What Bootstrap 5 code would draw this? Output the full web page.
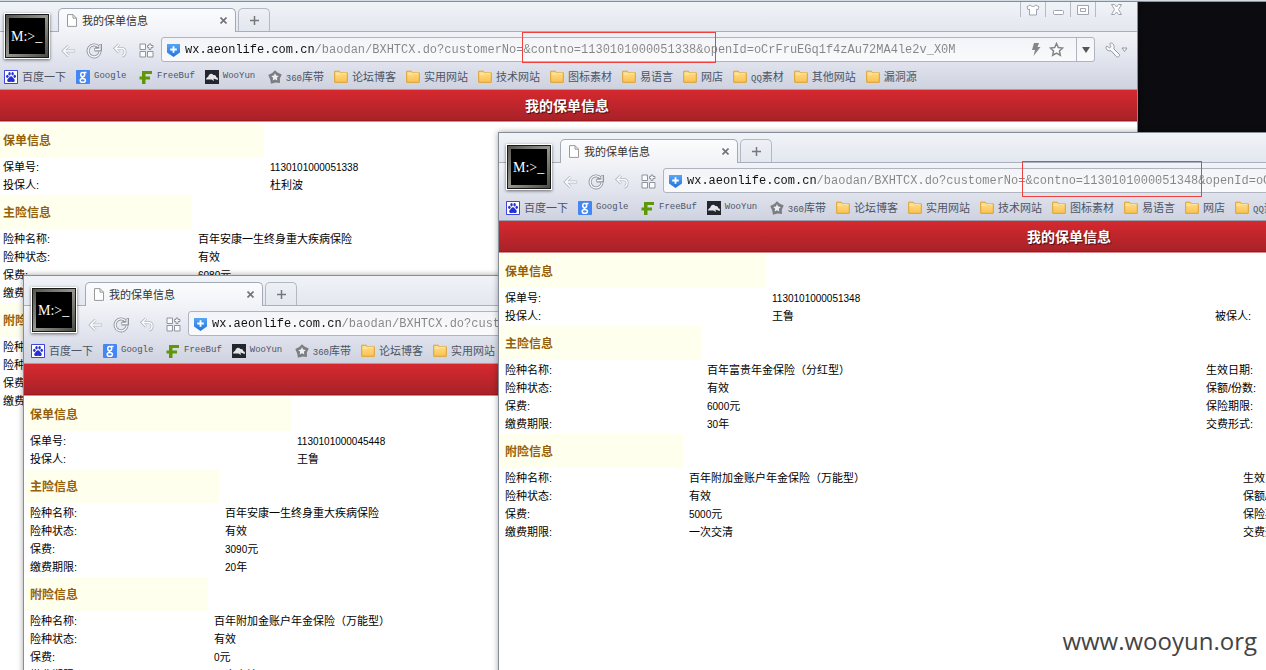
<!DOCTYPE html>
<html lang="zh-CN">
<head>
<meta charset="utf-8">
<meta name="viewport" content="width=device-width, initial-scale=1">
<title>我的保单信息</title>
<link href="https://cdn.jsdelivr.net/npm/bootstrap@5.3.0/dist/css/bootstrap.min.css" rel="stylesheet">
<style>
  body { background: #0b0b10; font-family: "Liberation Sans", "Noto Sans CJK SC", sans-serif; font-size: 11px; line-height: 18px; color: #000; }
  .desktop { height: 100vh; border-top: 1px solid #d3dbe3; }
  .desktop::before { content: ""; display: block; height: 1px; background: #8a939d; }
  button { background: none; border: 0; padding: 0; color: inherit; }

  /* windows on the desktop */
  .win { position: absolute; border: 1px solid #858d98; background: #fff; box-shadow: 0 0 6px rgba(0,0,0,.35); }
  .win-a { left: -4px; right: 128px; top: 0; bottom: -20px; }
  .win-b { left: 23px; right: 101px; top: 274px; bottom: -40px; }
  .win-c { left: 498px; right: -374px; top: 131px; bottom: -40px; }

  /* browser frame */
  .frame { background: linear-gradient(#f0f3f7, #e3e7ef 29px, #a9afba 29px, #a9afba 30px, #f1f3f7 30px, #e3e6ef 55px, #ced2df); }
  .app-logo { width: 46px; height: 46px; margin: 11px 5px 0 7px; box-shadow: 0 1px 3px rgba(0,0,0,.55); border: 1px solid #fff; }
  .tabs { height: 30px; padding-left: 3px; gap: 2px; }
  .tab { width: 178px; height: 24px; border: 1px solid #a4aab5; border-bottom: 0; border-radius: 5px 5px 0 0; background: linear-gradient(#fbfcfd, #f1f3f7); color: #333; padding: 0 8px 0 7px; gap: 4px; }
  .tab-new { width: 32px; height: 23px; border: 1px solid #b3b8c2; border-bottom: 0; border-radius: 5px 5px 0 0; margin-bottom: 1px; }
  .controls button { width: 25px; height: 15px; border-left: 1px solid #b5bac4; }
  .controls button:last-child { width: 42px; }
  .toolbar { height: 33px; padding-top: 2px; }
  .tool { width: 26px; height: 24px; }
  .address { height: 25px; margin-left: 2px; border: 1px solid #b0b4be; border-radius: 3px; background: linear-gradient(#f3f4f8, #fafafc); }
  .address input { border: 0; outline: 0; padding: 0; height: 20px; font: 12px/20px "Liberation Mono", monospace; color: #777;
    background: linear-gradient(to right, #111 130px, #858585 130px); -webkit-background-clip: text; background-clip: text; -webkit-text-fill-color: transparent; }
  .drop { width: 18px; height: 23px; border-left: 1px solid #b0b4be; }
  .menu-tool { width: 42px; }
  .bookmarks { height: 25px; padding: 0 0 1px 7px; gap: 10px; border-bottom: 1px solid #99a1b0; }
  .bookmarks a { color: #4c5566; gap: 4px; text-decoration: none; }
  .mono { font-family: "Liberation Mono", monospace; font-size: 9px; line-height: 1; }
  .mono-name { min-width: 35px; }

  /* page in the window */
  .banner { height: 32px; margin: 0; font-size: 14px; line-height: 32px; font-weight: 700; color: #fff; text-shadow: 1px 1px 1px rgba(0,0,0,.6);
    background: linear-gradient(#d5292f, #a82228 30px, #990c10 31px, #d88a8c 31px); }
  .policy { width: 100%; table-layout: fixed; border-collapse: separate; border-spacing: 0; }
  .policy td { height: 18px; padding: 0 5px; white-space: nowrap; }
  .policy td:first-child { padding-left: 6px; }
  .policy th { height: 36px; padding: 2px 5px 0; font-size: 12px; color: #96600a; background: #ffffed; border: 1px solid #fff; }
  .policy .key { width: 268px; }
  .policy .value { width: 443px; }
  .policy.main-risk .key { width: 196px; }
  .policy.main-risk .value { width: 499px; }
  .policy.extra-risk .key { width: 185px; }
  .policy.extra-risk .value { width: 554px; }
  .win-c .policy.main-risk .key { width: 203px; }
  .num { font-size: 10px; line-height: 1; }

  /* notes drawn over the screen */
  .marker { position: absolute; border: 1px solid #f0413f; pointer-events: none; }
  .marker-a { left: 522px; top: 31px; width: 194px; height: 31px; }
  .marker-c { left: 1022px; top: 160px; width: 180px; height: 36px; }
  .watermark { position: absolute; right: 9px; bottom: 12px; font: 24px/34px "Open Sans", sans-serif; color: #444; }
</style>
</head>
<body>

<svg class="position-absolute" width="0" height="0" aria-hidden="true" xmlns="http://www.w3.org/2000/svg">
  <defs>
    <linearGradient id="steel" x1="0" y1="0" x2="1" y2="1"><stop offset="0" stop-color="#55554f"/><stop offset=".5" stop-color="#96968f"/><stop offset="1" stop-color="#4a4a45"/></linearGradient>
    <linearGradient id="gold" x1="0" y1="0" x2="0" y2="1"><stop offset="0" stop-color="#ffe08c"/><stop offset="1" stop-color="#fbc152"/></linearGradient>
    <linearGradient id="sky" x1="0" y1="0" x2="0" y2="1"><stop offset="0" stop-color="#55a5f8"/><stop offset="1" stop-color="#2273e0"/></linearGradient>
    <symbol id="i-folder" viewBox="0 0 14 13"><path d="M.7 1.2h4.6l1.2 1.6h6.8v9.5H.7z" fill="url(#gold)" stroke="#dda12f"/><path d="M1.4 4.2h4.2l1-.9h6" stroke="#fff0bd" fill="none" stroke-width=".8"/></symbol>
    <symbol id="i-baidu" viewBox="0 0 15 15"><path d="M.5.5h14v14H.5z" fill="#fff" stroke="#2a31d8"/><g fill="#2530d4"><ellipse cx="3.6" cy="6.8" rx="1.3" ry="1.7"/><ellipse cx="5.9" cy="4" rx="1.3" ry="1.8"/><ellipse cx="9.2" cy="4" rx="1.3" ry="1.8"/><ellipse cx="11.5" cy="6.8" rx="1.3" ry="1.7"/><path d="M7.5 6.6c1.7 0 2 1.6 3.200 2.700 1.500 1.400.8 3.600-1 3.600-.8 0-1.300-.3-2.200-.3s-1.400.3-2.200.3c-1.800 0-2.500-2.200-1-3.600C5.500 8.200 5.800 6.600 7.500 6.600z"/></g></symbol>
    <symbol id="i-google" viewBox="0 0 14 14"><rect width="14" height="14" rx="1" fill="#4486f3"/><g fill="none" stroke="#fff" stroke-width="1.5"><ellipse cx="6.700" cy="4.600" rx="2" ry="2.200"/><path d="M8 2.600h2.500M7 6.800c-1.500.8-.6 1.400.6 2"/><ellipse cx="6.800" cy="10.400" rx="2.600" ry="1.800"/></g></symbol>
    <symbol id="i-freebuf" viewBox="0 0 14 14"><path d="M3 1h10v3H6.500v2.500H11v3H6.500V14H3V9.500H.5v-3H3z" fill="#5f9708"/></symbol>
    <symbol id="i-wooyun" viewBox="0 0 14 14"><path d="M0 0h14v14H0z" fill="#23262f"/><path d="M1 9.500C1 7.500 3 7.400 3.300 6.500 4 3.500 7 3 8.300 5c2.200-.4 3 1 2.900 2.300C13 7.500 13.300 9 12.700 10L8.500 8.500 9 11 6.500 9.500z" fill="#e5e5e8"/></symbol>
    <symbol id="i-360" viewBox="0 0 15 15"><path d="M7.500.3l2.600 2.500 4.600 2-2 4.300.1 4.900-4.700-.6-4.900 1.200-.9-4.800L.3 5.300l4.300-2z" fill="#7b7d80"/><path d="M7.500 3.300l1.200 2.600 2.900.4-2.100 2 .5 2.900-2.500-1.400L5 11.200l.5-2.900-2.100-2 2.900-.4z" fill="#eceef3"/></symbol>
    <symbol id="i-page" viewBox="0 0 12 13"><path d="M1.500.6h5.500l3.500 3.600v8.200h-9z M7 .6v3.600h3.500" fill="#fff" stroke="#999"/></symbol>
    <symbol id="i-back" viewBox="0 0 16 14"><path d="M8 1.500L2.500 7 8 12.500M3 7h12" fill="none" stroke="#b7bbc4" stroke-width="3.200"/><path d="M8 1.700L2.700 7 8 12.300M3 7h11.500" fill="none" stroke="#fafbfc" stroke-width="1.600"/></symbol>
    <symbol id="i-reload" viewBox="0 0 16 16"><path d="M12.300 3.600A6 6 0 1 0 14 9M14.500 1v6h-6M8.800 7l4-4" fill="none" stroke="#8f939c" stroke-width="3"/><path d="M12.300 3.600A6 6 0 1 0 14 9M14 1.500v5H9" fill="none" stroke="#f8f9fb" stroke-width="1.300"/></symbol>
    <symbol id="i-undo" viewBox="0 0 16 16"><path d="M6.500 1.500L2 5.800l4.500 4.300M2.500 5.800h6.500c5 0 5 6.500 1 8.500" fill="none" stroke="#b3b7c0" stroke-width="3"/><path d="M6.500 1.700L2.300 5.800l4.200 4.100M2.500 5.800h6.500c5 0 5 6.300 1 8.300" fill="none" stroke="#fafbfc" stroke-width="1.500"/></symbol>
    <symbol id="i-apps" viewBox="0 0 15 15"><path d="M1 1h5.500v5.500H1zM1 8.500h5.500V14H1zM8.500 8.500H14V14H8.500zM10 1h2v1.500h2v2h-2V6.500h-2v-2H8.500v-2H10z" fill="#fbfbfd" stroke="#8f939c"/></symbol>
    <symbol id="i-shield" viewBox="0 0 13 14"><path d="M0 1h13v8.500L6.500 14 0 9.500z" fill="url(#sky)"/><path d="M6.500 3.200v6.600M3.200 6.500h6.600" stroke="#fff" stroke-width="1.800"/></symbol>
    <symbol id="i-bolt" viewBox="0 0 10 13"><path d="M3 0h5L6.500 4H9.500L2.500 13 4 7H1z" fill="#858585"/></symbol>
    <symbol id="i-star" viewBox="0 0 15 15"><path d="M7.500 1.500l1.800 4 4.300.5-3.200 2.900.9 4.300-3.800-2.200-3.800 2.200.9-4.300L1.400 6l4.300-.5z" fill="#fff" stroke="#858585" stroke-width="1.500"/></symbol>
    <symbol id="i-wrench" viewBox="0 0 16 16"><path d="M5.500 1c-1 .3-.5 2.500.5 3.200L4.500 6C3.500 5.500 2.500 4 1.300 4.300.3 7 2.500 9.500 6 8.700l5.500 6c1.500 1.300 4-.8 2.700-2.500L8.800 6.800C9.800 3.500 8 .8 5.500 1z" fill="#fafafc" stroke="#93969e"/></symbol>
    <symbol id="i-shirt" viewBox="0 0 14 12"><path d="M4.500 1C5 3 9 3 9.500 1L13 2.700l-1 3-1.500-.5V11h-7V5.200L2 5.700l-1-3z" fill="#fff" stroke="#9fa4ae"/></symbol>
  </defs>
</svg>

<template id="browser-frame">
  <header class="frame">
    <div class="d-flex">
      <svg class="app-logo flex-shrink-0" viewBox="0 0 44 44" role="img" aria-label="终端">
        <path d="M0 0h44v44H0z" fill="#191917"/><path d="M1 1h42v42H1z" fill="url(#steel)"/><path d="M4 4h36v36H4z" fill="#000"/>
        <text x="6" y="27" font-family="Liberation Serif, serif" font-size="14" fill="#fff">M:&gt;_</text>
      </svg>
      <div class="flex-grow-1">
        <div class="tabs d-flex align-items-end">
          <div class="tab d-flex align-items-center">
            <svg width="12" height="13"><use href="#i-page"/></svg>
            <span>我的保单信息</span>
            <button type="button" class="ms-auto d-flex" aria-label="关闭标签页"><svg width="7" height="7" viewBox="0 0 7 7"><path d="M.5.5l6 6M6.500.5l-6 6" stroke="#70737a" stroke-width="1.600"/></svg></button>
          </div>
          <button type="button" class="tab-new d-flex align-items-center justify-content-center" aria-label="新建标签页"><svg width="9" height="9" viewBox="0 0 9 9"><path d="M4.500 0v9M0 4.500h9" stroke="#777" stroke-width="1.500"/></svg></button>
          <div class="controls d-flex align-self-start ms-auto">
            <button type="button" class="d-flex align-items-center justify-content-center" aria-label="皮肤"><svg width="14" height="12"><use href="#i-shirt"/></svg></button>
            <button type="button" class="d-flex align-items-end justify-content-center" aria-label="最小化"><svg width="11" height="7" viewBox="0 0 11 7"><rect x=".5" y=".5" width="10" height="4" rx="1" fill="#fff" stroke="#9fa4ae"/></svg></button>
            <button type="button" class="d-flex align-items-center justify-content-center" aria-label="最大化"><svg width="12" height="10" viewBox="0 0 12 10"><path d="M.5.500h11v9H.5zM3.500 3.500h5v3h-5z" fill="#fff" stroke="#9fa4ae"/></svg></button>
            <button type="button" class="d-flex align-items-center justify-content-center" aria-label="关闭"><svg width="11" height="11" viewBox="0 0 11 11"><path d="M.5.500h3l2 2.500 2-2.500h3L7.500 5.500l3 5h-3l-2-2.500-2 2.500h-3l3-5z" fill="#fff" stroke="#9fa4ae"/></svg></button>
          </div>
        </div>
        <div class="toolbar d-flex align-items-center">
          <button type="button" class="tool" aria-label="后退"><svg width="15" height="14"><use href="#i-back"/></svg></button>
          <button type="button" class="tool" aria-label="刷新"><svg width="16" height="16"><use href="#i-reload"/></svg></button>
          <button type="button" class="tool" aria-label="恢复"><svg width="15" height="15"><use href="#i-undo"/></svg></button>
          <button type="button" class="tool" aria-label="应用"><svg width="15" height="15"><use href="#i-apps"/></svg></button>
          <div class="address d-flex align-items-center flex-grow-1">
            <svg class="ms-1 me-1 flex-shrink-0" width="15" height="14"><use href="#i-shield"/></svg>
            <input type="text" class="flex-grow-1" aria-label="地址" spellcheck="false">
            <svg class="me-2" width="10" height="13"><use href="#i-bolt"/></svg>
            <svg class="me-2" width="15" height="15"><use href="#i-star"/></svg>
            <button type="button" class="drop ms-1 d-flex align-items-center justify-content-center" aria-label="历史地址"><svg width="8" height="6" viewBox="0 0 8 6"><path d="M0 0h8L4 6z" fill="#555"/></svg></button>
          </div>
          <button type="button" class="menu-tool d-flex align-items-center justify-content-center" aria-label="工具"><svg width="16" height="16"><use href="#i-wrench"/></svg><svg width="7" height="6" viewBox="0 0 7 6"><path d="M1 1h5L3.500 4.500z" fill="#fff" stroke="#93969e"/></svg></button>
        </div>
      </div>
    </div>
    <nav class="bookmarks d-flex align-items-center overflow-hidden text-nowrap" aria-label="书签">
      <a href="#" class="d-flex align-items-center"><svg width="14" height="14"><use href="#i-baidu"/></svg>百度一下</a>
      <a href="#" class="d-flex align-items-center"><svg width="14" height="14"><use href="#i-google"/></svg><span class="mono mono-name">Google</span></a>
      <a href="#" class="d-flex align-items-center"><svg width="14" height="14"><use href="#i-freebuf"/></svg><span class="mono mono-name">FreeBuf</span></a>
      <a href="#" class="d-flex align-items-center"><svg width="14" height="14"><use href="#i-wooyun"/></svg><span class="mono mono-name">WooYun</span></a>
      <a href="#" class="d-flex align-items-center"><svg width="14" height="14"><use href="#i-360"/></svg><span><span class="mono">360</span>库带</span></a>
      <a href="#" class="d-flex align-items-center"><svg width="14" height="13"><use href="#i-folder"/></svg>论坛博客</a>
      <a href="#" class="d-flex align-items-center"><svg width="14" height="13"><use href="#i-folder"/></svg>实用网站</a>
      <a href="#" class="d-flex align-items-center"><svg width="14" height="13"><use href="#i-folder"/></svg>技术网站</a>
      <a href="#" class="d-flex align-items-center"><svg width="14" height="13"><use href="#i-folder"/></svg>图标素材</a>
      <a href="#" class="d-flex align-items-center"><svg width="14" height="13"><use href="#i-folder"/></svg>易语言</a>
      <a href="#" class="d-flex align-items-center"><svg width="14" height="13"><use href="#i-folder"/></svg>网店</a>
      <a href="#" class="d-flex align-items-center"><svg width="14" height="13"><use href="#i-folder"/></svg><span><span class="mono">QQ</span>素材</span></a>
      <a href="#" class="d-flex align-items-center"><svg width="14" height="13"><use href="#i-folder"/></svg>其他网站</a>
      <a href="#" class="d-flex align-items-center"><svg width="14" height="13"><use href="#i-folder"/></svg>漏洞源</a>
    </nav>
  </header>
</template>

<main class="desktop position-relative overflow-hidden">

  <section class="win win-a" data-contno="1130101000051338">
    <h1 class="banner text-center">我的保单信息</h1>
    <table class="policy">
      <colgroup><col class="key"><col class="value"><col></colgroup>
      <tr><th scope="col">保单信息</th></tr>
      <tr><td>保单号:</td><td><span class="num">1130101000051338</span></td></tr>
      <tr><td>投保人:</td><td>杜利波</td></tr>
    </table>
    <table class="policy main-risk">
      <colgroup><col class="key"><col class="value"><col></colgroup>
      <tr><th scope="col">主险信息</th></tr>
      <tr><td>险种名称:</td><td>百年安康一生终身重大疾病保险</td></tr>
      <tr><td>险种状态:</td><td>有效</td></tr>
      <tr><td>保费:</td><td><span class="num">6080</span>元</td></tr>
      <tr><td>缴费期限:</td></tr>
    </table>
    <table class="policy extra-risk">
      <colgroup><col class="key"><col class="value"><col></colgroup>
      <tr><th scope="col">附险信息</th></tr>
      <tr><td>险种名称:</td></tr>
      <tr><td>险种状态:</td></tr>
      <tr><td>保费:</td></tr>
      <tr><td>缴费期限:</td></tr>
    </table>
  </section>

  <section class="win win-b" data-contno="1130101000045448">
    <h1 class="banner text-center">我的保单信息</h1>
    <table class="policy">
      <colgroup><col class="key"><col class="value"><col></colgroup>
      <tr><th scope="col">保单信息</th></tr>
      <tr><td>保单号:</td><td><span class="num">1130101000045448</span></td></tr>
      <tr><td>投保人:</td><td>王鲁</td></tr>
    </table>
    <table class="policy main-risk">
      <colgroup><col class="key"><col class="value"><col></colgroup>
      <tr><th scope="col">主险信息</th></tr>
      <tr><td>险种名称:</td><td>百年安康一生终身重大疾病保险</td></tr>
      <tr><td>险种状态:</td><td>有效</td></tr>
      <tr><td>保费:</td><td><span class="num">3090</span>元</td></tr>
      <tr><td>缴费期限:</td><td><span class="num">20</span>年</td></tr>
    </table>
    <table class="policy extra-risk">
      <colgroup><col class="key"><col class="value"><col></colgroup>
      <tr><th scope="col">附险信息</th></tr>
      <tr><td>险种名称:</td><td>百年附加金账户年金保险（万能型）</td></tr>
      <tr><td>险种状态:</td><td>有效</td></tr>
      <tr><td>保费:</td><td><span class="num">0</span>元</td></tr>
      <tr><td>缴费期限:</td><td>一次交清</td></tr>
    </table>
  </section>

  <section class="win win-c" data-contno="1130101000051348">
    <h1 class="banner text-center">我的保单信息</h1>
    <table class="policy">
      <colgroup><col class="key"><col class="value"><col></colgroup>
      <tr><th scope="col">保单信息</th></tr>
      <tr><td>保单号:</td><td><span class="num">1130101000051348</span></td></tr>
      <tr><td>投保人:</td><td>王鲁</td><td>被保人:</td></tr>
    </table>
    <table class="policy main-risk">
      <colgroup><col class="key"><col class="value"><col></colgroup>
      <tr><th scope="col">主险信息</th></tr>
      <tr><td>险种名称:</td><td>百年富贵年金保险（分红型）</td><td>生效日期:</td></tr>
      <tr><td>险种状态:</td><td>有效</td><td>保额/份数:</td></tr>
      <tr><td>保费:</td><td><span class="num">6000</span>元</td><td>保险期限:</td></tr>
      <tr><td>缴费期限:</td><td><span class="num">30</span>年</td><td>交费形式:</td></tr>
    </table>
    <table class="policy extra-risk">
      <colgroup><col class="key"><col class="value"><col></colgroup>
      <tr><th scope="col">附险信息</th></tr>
      <tr><td>险种名称:</td><td>百年附加金账户年金保险（万能型）</td><td>生效日期:</td></tr>
      <tr><td>险种状态:</td><td>有效</td><td>保额/份数:</td></tr>
      <tr><td>保费:</td><td><span class="num">5000</span>元</td><td>保险期限:</td></tr>
      <tr><td>缴费期限:</td><td>一次交清</td><td>交费形式:</td></tr>
    </table>
  </section>

  <div class="marker marker-a"></div>
  <div class="marker marker-c"></div>
  <div class="watermark">www.wooyun.org</div>
</main>

<script src="https://cdn.jsdelivr.net/npm/bootstrap@5.3.0/dist/js/bootstrap.bundle.min.js"></script>
<script>
  // every window gets the same browser frame with its own address
  const frame = document.getElementById('browser-frame');
  document.querySelectorAll('.win').forEach(win => {
    const copy = frame.content.cloneNode(true);
    copy.querySelector('input').value =
      'wx.aeonlife.com.cn/baodan/BXHTCX.do?customerNo=&contno=' + win.dataset.contno + '&openId=oCrFruEGq1f4zAu72MA4le2v_X0M';
    win.prepend(copy);
  });
</script>
</body>
</html>
